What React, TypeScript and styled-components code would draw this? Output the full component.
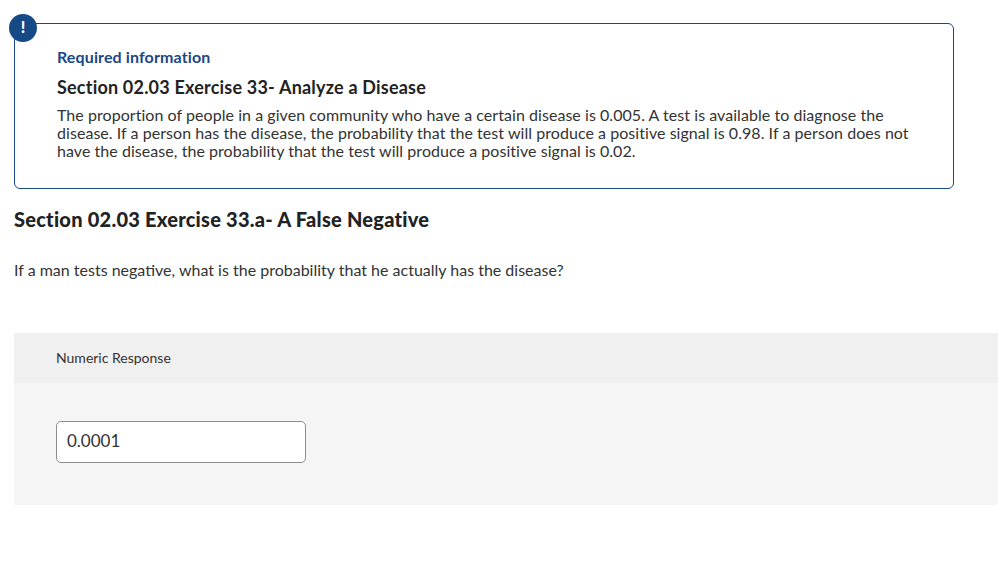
import React from "react";
import styled, { createGlobalStyle } from "styled-components";

const Global = createGlobalStyle`
  html, body { margin: 0; padding: 0; background: #fff; }
  body { font-family: Lato, "Noto Sans", Arial, sans-serif; color: #2d2d2d; }
`;

const Page = styled.main`
  width: 998px;
  height: 582px;
  overflow: hidden;
  padding: 23px 0 0 14px;
  box-sizing: border-box;
`;

const Notice = styled.section`
  position: relative;
  width: 940px;
  height: 166px;
  box-sizing: border-box;
  border: 1px solid #1a4a85;
  border-radius: 6px;
  padding: 24px 42px 0;
`;

const Badge = styled.div`
  position: absolute;
  left: -6px;
  top: -10px;
  width: 28px;
  height: 28px;
  border-radius: 50%;
  background: #164a86;
  color: #fff;
  font-size: 16px;
  font-weight: 900;
  line-height: 26px;
  text-align: center;
`;

const Required = styled.div`
  color: #1d4785;
  font-size: 16px;
  font-weight: 700;
  letter-spacing: 0.12px;
  line-height: 18px;
`;

const NoticeTitle = styled.h2`
  margin: 11px 0 0;
  font-size: 18px;
  font-weight: 700;
  letter-spacing: 0.2px;
  line-height: 20px;
  color: #222;
`;

const Body = styled.p`
  margin: 9px 0 0;
  width: 856px;
  font-size: 16px;
  letter-spacing: 0.05px;
  line-height: 18px;
  color: #333;
`;

const PartTitle = styled.h1`
  margin: 18px 0 0;
  font-size: 20px;
  font-weight: 900;
  letter-spacing: 0.24px;
  line-height: 24px;
  color: #222;
`;

const Question = styled.p`
  margin: 29px 0 0;
  font-size: 16px;
  line-height: 20px;
  color: #333;
`;

const Response = styled.section`
  margin-top: 53px;
  border-radius: 2px;
  background: #f5f5f5;
  height: 172px;
`;

const ResponseHead = styled.div`
  height: 50px;
  box-sizing: border-box;
  padding: 0 42px;
  background: #f0f0f0;
  font-size: 14px;
  line-height: 50px;
  color: #333;
`;

const ResponseBody = styled.div`
  padding: 38px 42px 0;
`;

const Answer = styled.input`
  display: block;
  width: 250px;
  height: 42px;
  box-sizing: border-box;
  padding: 0 10px 3px;
  border: 1px solid #8d8d8d;
  border-radius: 5px;
  background: #fff;
  font: 400 17px Lato, "Noto Sans", sans-serif;
  color: #333;
`;

export default function App() {
  return (
    <Page>
      <Global />
      <Notice>
        <Badge>!</Badge>
        <Required>Required information</Required>
        <NoticeTitle>Section 02.03 Exercise 33- Analyze a Disease</NoticeTitle>
        <Body>
          The proportion of people in a given community who have a certain disease is 0.005. A test is available to diagnose the disease. If a person has the disease, the probability that the test will produce a positive signal is 0.98. If a person does not have the disease, the probability that the test will produce a positive signal is 0.02.
        </Body>
      </Notice>
      <PartTitle>Section 02.03 Exercise 33.a- A False Negative</PartTitle>
      <Question>If a man tests negative, what is the probability that he actually has the disease?</Question>
      <Response>
        <ResponseHead>Numeric Response</ResponseHead>
        <ResponseBody>
          <Answer readOnly value="0.0001" />
        </ResponseBody>
      </Response>
    </Page>
  );
}
